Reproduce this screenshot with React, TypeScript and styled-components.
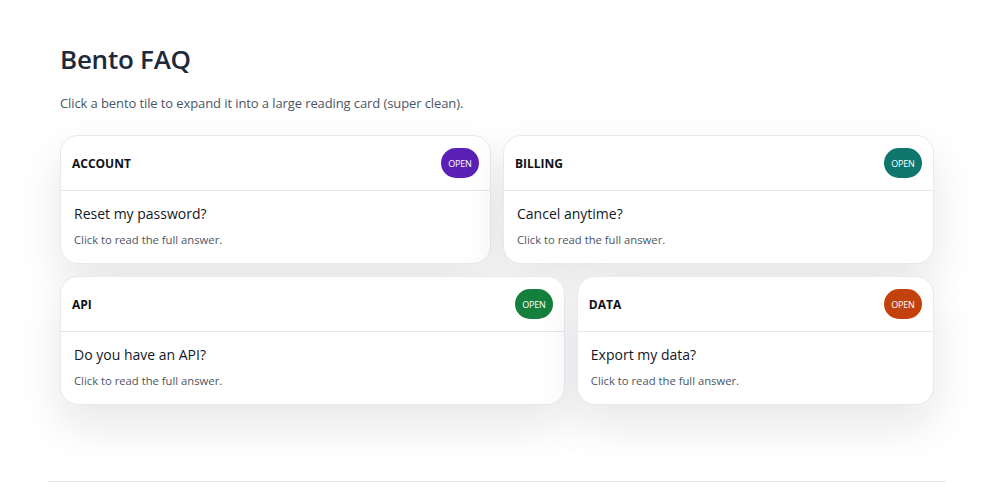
import React from "react";
import styled, { createGlobalStyle } from "styled-components";

const Global = createGlobalStyle`
  html, body { margin: 0; padding: 0; background: #ffffff; }
  body { font-family: "Open Sans", "Noto Sans", sans-serif; color: #111827; }
  * { box-sizing: border-box; }
`;

const Page = styled.main`
  width: 899px;
  margin-left: 47px;
`;

const Content = styled.div`
  padding: 39px 12px 76px 13px;
`;

const Title = styled.h1`
  margin: 0;
  font-size: 26px;
  font-weight: 600;
  line-height: 40px;
  color: #1e293b;
  letter-spacing: -0.25px;
`;

const Subtitle = styled.p`
  margin: 14px 0 0;
  font-size: 13px;
  line-height: 20px;
  color: #4b5563;
  letter-spacing: -0.1px;
`;

const Grid = styled.div`
  margin-top: 22px;
  display: grid;
  grid-template-columns: repeat(12, 1fr);
  gap: 12px;
`;

const Card = styled.div<{ $span: number }>`
  grid-column: span ${(p) => p.$span};
  background: #ffffff;
  border: 1px solid #e9e9ec;
  border-radius: 18px;
  box-shadow: 0 20px 45px rgba(15, 23, 42, 0.1);
  overflow: hidden;
`;

const Header = styled.div`
  height: 55px;
  display: flex;
  align-items: center;
  justify-content: space-between;
  padding: 0 11px;
  border-bottom: 1px solid #e5e7eb;
`;

const Label = styled.span`
  font-size: 12px;
  font-weight: 700;
  color: #0f0f17;
`;

const Badge = styled.span<{ $color: string }>`
  display: inline-flex;
  align-items: center;
  justify-content: center;
  height: 30px;
  min-width: 38px;
  padding: 0 7px;
  border-radius: 999px;
  background: ${(p) => p.$color};
  color: #ffffff;
  font-size: 9px;
  font-weight: 500;
  letter-spacing: -0.2px;
`;

const Body = styled.div`
  padding: 13px 13px 15px;
`;

const Question = styled.div`
  font-size: 14px;
  line-height: 20px;
  color: #111827;
`;

const Hint = styled.div`
  margin-top: 8px;
  font-size: 11.25px;
  line-height: 16px;
  color: #4b5563;
`;

const Rule = styled.hr`
  margin: 0;
  border: 0;
  border-top: 1px solid #e5e7eb;
`;

const tiles = [
  { label: "ACCOUNT", q: "Reset my password?", color: "#5b21b6", span: 6 },
  { label: "BILLING", q: "Cancel anytime?", color: "#0f766e", span: 6 },
  { label: "API", q: "Do you have an API?", color: "#15803d", span: 7 },
  { label: "DATA", q: "Export my data?", color: "#c2410c", span: 5 },
];

export default function App() {
  return (
    <>
      <Global />
      <Page>
        <Content>
          <Title>Bento FAQ</Title>
          <Subtitle>Click a bento tile to expand it into a large reading card (super clean).</Subtitle>
          <Grid>
            {tiles.map((t) => (
              <Card key={t.label} $span={t.span}>
                <Header>
                  <Label>{t.label}</Label>
                  <Badge $color={t.color}>OPEN</Badge>
                </Header>
                <Body>
                  <Question>{t.q}</Question>
                  <Hint>Click to read the full answer.</Hint>
                </Body>
              </Card>
            ))}
          </Grid>
        </Content>
        <Rule />
      </Page>
    </>
  );
}
